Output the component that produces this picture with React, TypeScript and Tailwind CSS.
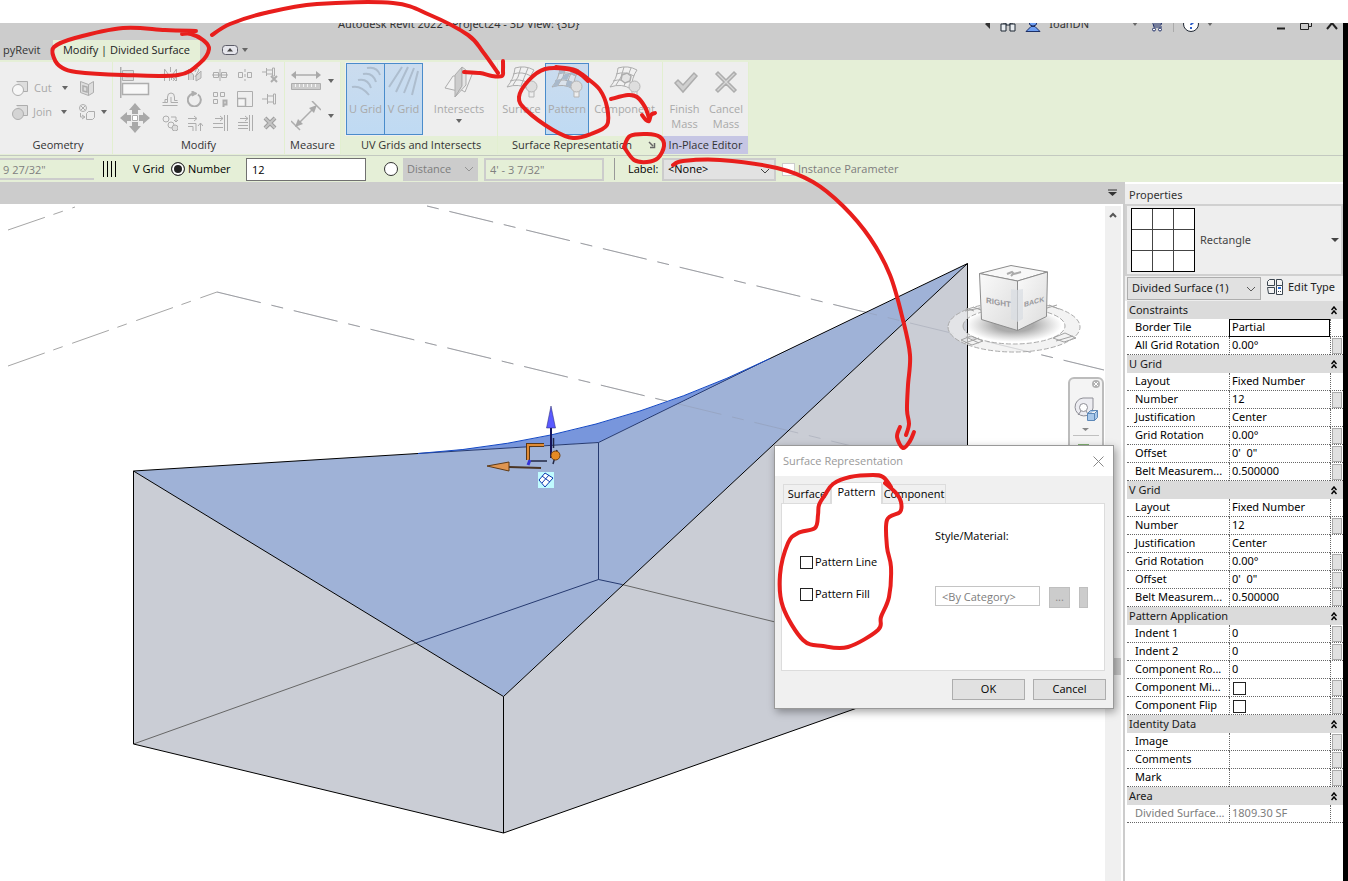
import { useId, useState } from "react";
import type { ReactNode } from "react";

type Point = [number, number];

type Row = {
  name: string;
  value?: string;
  check?: boolean;
  button?: boolean;
  boxed?: boolean;
  muted?: boolean;
};

const groups: { title: string; rows: Row[] }[] = [
  {
    title: "Constraints",
    rows: [
      { name: "Border Tile", value: "Partial", boxed: true },
      { name: "All Grid Rotation", value: "0.00°", button: true },
    ],
  },
  {
    title: "U Grid",
    rows: [
      { name: "Layout", value: "Fixed Number" },
      { name: "Number", value: "12", button: true },
      { name: "Justification", value: "Center" },
      { name: "Grid Rotation", value: "0.00°", button: true },
      { name: "Offset", value: "0'  0\"", button: true },
      { name: "Belt Measurem...", value: "0.500000", button: true },
    ],
  },
  {
    title: "V Grid",
    rows: [
      { name: "Layout", value: "Fixed Number" },
      { name: "Number", value: "12", button: true },
      { name: "Justification", value: "Center" },
      { name: "Grid Rotation", value: "0.00°", button: true },
      { name: "Offset", value: "0'  0\"", button: true },
      { name: "Belt Measurem...", value: "0.500000", button: true },
    ],
  },
  {
    title: "Pattern Application",
    rows: [
      { name: "Indent 1", value: "0", button: true },
      { name: "Indent 2", value: "0", button: true },
      { name: "Component Ro...", value: "0" },
      { name: "Component Mi...", check: true, button: true },
      { name: "Component Flip", check: true, button: true },
    ],
  },
  {
    title: "Identity Data",
    rows: [
      { name: "Image", button: true },
      { name: "Comments", button: true },
      { name: "Mark", button: true },
    ],
  },
  {
    title: "Area",
    rows: [{ name: "Divided Surface...", value: "1809.30 SF", muted: true }],
  },
];

// Freehand red marker strokes
const strokes: Point[][] = [
  [[196, 31], [165, 30], [123, 28], [75, 38], [54, 47], [54, 58], [61, 67], [76, 72], [123, 75], [178, 75], [200, 63], [209, 49], [203, 40], [191, 34], [182, 34]],
  [[212, 35], [230, 24], [265, 13], [317, 4], [393, 3], [430, 15], [468, 35], [483, 52], [498, 73]],
  [[464, 72], [480, 73], [492, 76], [502, 76], [503, 70], [503, 61]],
  [[556, 67], [575, 70], [588, 79], [600, 90], [607, 107], [607, 125], [591, 134], [573, 138], [553, 130], [526, 110], [519, 97], [529, 80], [545, 69], [567, 69], [580, 74], [588, 81]],
  [[611, 99], [628, 95], [637, 97], [645, 107], [649, 118]],
  [[642, 115], [646, 120], [649, 121], [651, 115], [655, 113]],
  [[624, 147], [630, 136], [647, 134], [660, 137], [664, 146], [658, 158], [647, 162], [634, 160], [624, 147]],
  [[673, 165], [683, 161], [720, 160], [777, 168], [813, 182], [843, 206], [870, 238], [890, 275], [903, 320], [910, 355], [908, 385], [907, 410], [909, 424], [906, 435]],
  [[900, 427], [897, 437], [903, 448], [910, 441], [914, 432]],
  [[886, 482], [891, 487], [883, 477], [873, 475], [850, 477], [833, 484], [825, 495], [819, 505], [818, 515], [815, 528], [798, 533], [788, 543], [780, 575], [783, 607], [803, 640], [823, 646], [848, 647], [878, 630], [881, 617], [889, 597], [891, 567], [887, 547], [887, 520], [900, 512], [901, 502], [896, 493], [885, 483]],
];

// Catmull-Rom spline through all points
function smooth(points: Point[]) {
  let d = `M${points[0][0]} ${points[0][1]}`;
  for (let i = 0; i < points.length - 1; i++) {
    const a = points[i - 1] ?? points[i];
    const b = points[i];
    const c = points[i + 1];
    const e = points[i + 2] ?? c;
    d += `C${b[0] + (c[0] - a[0]) / 6} ${b[1] + (c[1] - a[1]) / 6} ${c[0] - (e[0] - b[0]) / 6} ${c[1] - (e[1] - b[1]) / 6} ${c[0]} ${c[1]}`;
  }
  return d;
}

function Glyph({ w = 16, h = 16, children }: { w?: number; h?: number; children: ReactNode }) {
  return (
    <svg width={w} height={h} viewBox={`0 0 ${w} ${h}`} fill="none" stroke="#adadad" className="block shrink-0" aria-hidden="true">
      {children}
    </svg>
  );
}

function Caret({ color = "#666" }: { color?: string }) {
  return (
    <svg width="6" height="4" viewBox="0 0 6 4" className="block shrink-0" aria-hidden="true">
      <path d="M0 0h6L3 4z" fill={color} />
    </svg>
  );
}

function Combo({ value, label, className, disabled }: { value: string; label: string; className: string; disabled?: boolean }) {
  return (
    <div className={`relative ${className}`}>
      <select
        aria-label={label}
        disabled={disabled}
        className="block h-full w-full appearance-none bg-transparent pl-1 outline-none"
      >
        <option>{value}</option>
      </select>
      <svg width="10" height="6" viewBox="0 0 10 6" fill="none" stroke="currentColor" className="pointer-events-none absolute top-2 right-1 opacity-70">
        <path d="M1 1l4 4 4-4" />
      </svg>
    </div>
  );
}

function TitleBar() {
  return (
    <div className="h-[17px] overflow-hidden bg-[#cccccc]">
      <div className="-mt-2 flex h-[18px] items-center">
        <span className="ml-[338px] whitespace-pre font-['Noto_Sans',sans-serif] text-[#333]">{"Autodesk Revit 2022 - Project24 - 3D View: {3D}"}</span>
        <div className="mr-[2px] ml-auto flex items-center">
          <svg width="6" height="10" viewBox="0 0 6 10" className="mr-2"><path d="M5 1v9L0 5z" fill="#333" /></svg>
          <svg width="18" height="16" viewBox="0 0 18 16" fill="#e8ecf0" stroke="#1d2733" className="mr-2">
            <path d="M4 2h3v5H4zM11 2h3v5h-3zM7 6h4v3H7z" />
            <path d="M2 8h5v7H2zM11 8h5v7h-5z" />
          </svg>
          <svg width="16" height="16" viewBox="0 0 16 16" fill="#6f9ff2" stroke="#1c2f66" className="mr-2">
            <circle cx="8" cy="6" r="4" />
            <path d="M1 15.500l5-5h4l5 5z" />
          </svg>
          <span className="mr-[43px] font-['Noto_Sans',sans-serif] text-[#333]">IoanDN</span>
          <Caret />
          <svg width="16" height="16" viewBox="0 0 16 16" fill="none" stroke="#1f2f68" className="ml-[10px]">
            <path d="M1 4h3l2 7h8M4 5h10l-1 4H5M6 7h8" />
            <circle cx="6" cy="13.500" r="1.500" fill="#fff" />
            <circle cx="12" cy="13.500" r="1.500" fill="#fff" />
          </svg>
          <div className="mx-[9px] h-4 w-px bg-[#aaa]" />
          <svg width="16" height="16" viewBox="0 0 16 16" fill="#fff" stroke="#1f2733" className="mr-2">
            <circle cx="8" cy="8" r="7.500" />
            <path d="M6 5c0-3 5-3 5 0 0 2-3 2-3 4M8 11v2" stroke="#2f5fc8" strokeWidth="2" fill="none" />
          </svg>
          <Caret />
          <svg width="64" height="16" viewBox="0 0 64 16" fill="none" stroke="#222" className="ml-16">
            <path d="M0 12.500h8" strokeWidth="2" />
            <path d="M23.500 7.500h8v6h-8zM26.500 7V5.500h8v5H32" strokeWidth="1" />
            <path d="M50 13l5-6 5 6" strokeWidth="2" />
          </svg>
        </div>
      </div>
    </div>
  );
}

function RibbonTabs() {
  return (
    <div className="flex h-5 bg-[#cccccc]">
      <button className="w-[53px] pl-[3px] text-left text-[#333]">pyRevit</button>
      <button className="w-[147px] bg-[#e5efd7] whitespace-nowrap text-[#222]">Modify | Divided Surface</button>
      <button className="ml-[22px] flex items-center gap-1" aria-label="Minimize ribbon">
        <svg width="16" height="10" viewBox="0 0 16 10">
          <rect x="0.500" y="0.500" width="15" height="9" rx="3" fill="#e6e6ec" stroke="#5c5c68" />
          <path d="M5 6.500h6L8 3z" fill="#444" />
        </svg>
        <Caret />
      </button>
    </div>
  );
}

function Panel({ title, className, titleClass = "", children }: { title: ReactNode; className: string; titleClass?: string; children: ReactNode }) {
  return (
    <section className={`flex shrink-0 flex-col border-r border-[#e2efd0] bg-[#eeeeee] ${className}`}>
      <div className="h-[74px] pt-px">{children}</div>
      <div className={`flex h-[18px] items-center justify-center whitespace-nowrap text-[#333] ${titleClass}`}>{title}</div>
    </section>
  );
}

function BigButton({ icon, label, className, active, arrow }: { icon: ReactNode; label: ReactNode; className: string; active?: boolean; arrow?: boolean }) {
  return (
    <button
      className={`flex h-[72px] shrink-0 flex-col items-center border pt-[2px] leading-[15px] text-[#a9a9a9] ${
        active ? "border-[#4a8ccb] bg-linear-to-b from-[#cbdcee] to-[#bfdaf3]" : "border-transparent"
      } ${className}`}
    >
      {icon}
      <span className="mt-[3px] whitespace-nowrap">{label}</span>
      {arrow && <span className="mt-[3px]"><Caret /></span>}
    </button>
  );
}

function Bulb() {
  return (
    <g>
      <path d="M24 24v7h5v-7" fill="#eee" stroke="#b5b5b5" />
      <circle cx="26.500" cy="20.500" r="5.500" fill="#dedede" stroke="#b5b5b5" />
    </g>
  );
}

function SurfaceIcon({ kind }: { kind: "grid" | "checks" | "component" }) {
  return (
    <Glyph w={34} h={32}>
      <path d="M10 2q10-3 19 2-5 7-6 19-9-6-21-2 7-8 8-19z" fill={kind === "checks" ? "#dbe3ec" : "#f1f1f1"} />
      <path d="M8 8q9-3 18 2M5 15q9-3 19 2M16 1q-2 11-8 18M23 2q-4 10-7 18" />
      {kind === "checks" && (
        <path d="M10 2l6-1-2 6-5 1zM22 2l6 2-3 6-5-2zM15 8l5 0-3 6-6-1zM6 14l5-1-3 7-5 1zM17 14l6 2-1 6-6-2z" fill="#a9b9cb" stroke="none" />
      )}
      {kind === "component" && <path d="M14 9l5-2 4 3-1 5-5 2-4-3z" fill="#e4e4e4" strokeWidth="1.500" />}
      <Bulb />
    </Glyph>
  );
}

const uGridIcon = (
  <Glyph w={32} h={32}>
    <path d="M17 2q10-2 13 7M13 8q10-2 13 8M8 14q10-2 13 8M2 21q9-2 17 8" stroke="#adbdce" strokeWidth="2" />
  </Glyph>
);

const vGridIcon = (
  <Glyph w={32} h={32}>
    <path d="M14 1L1 21M20 1L8 26M26 2l-10 25M30 5l-6 24" stroke="#adbdce" strokeWidth="2" />
  </Glyph>
);

const intersectsIcon = (
  <Glyph w={34} h={32}>
    <path d="M11 10h9l-4 15-13-3zM20 6h11l-8 20-9-5z" fill="#f2f2f2" />
    <path d="M20 1v19l-7 11V9z" fill="#cdcdcd" />
    <path d="M20 1l4 3v15l-11 12 7-11z" fill="#e5e5e5" />
  </Glyph>
);

const modifyIcons: { name: string; art: ReactNode }[] = [
  { name: "Mirror - Pick Axis", art: <><path d="M2.500 14V2l5 7v5M14.500 14V2l-5 7v4" /><path d="M8.500 0v5M10 10l4 4M14 10l-3 4" /></> },
  { name: "Mirror - Draw Axis", art: <><path d="M1.500 13V2l5 6v5M9 14V9l5-5v7z" fill="#d8d8d8" /><path d="M8 5l2-4 2 2-4 7" /></> },
  { name: "Split Element", art: <><path d="M1.500 5.500h5v5h-5zM9.500 5.500h5v5h-5zM0 8h16M8 2v12" /></> },
  { name: "Split with Gap", art: <><path d="M1.500 5.500h4v5h-4zM10.500 5.500h4v5h-4z" /><path d="M8 2v12" strokeDasharray="3 2" /></> },
  { name: "Unpin", art: <><path d="M0 5h4M4.500 1v8M4.500 3h6v4h-6M10.500 1l2 0v8h-2z" /><path d="M9 9l6 6M15 9l-6 6" strokeWidth="2" /></> },
  { name: "Offset", art: <path d="M.5 11.500h5V6q0-4 3.500-4t3.500 4v3.500h3M.5 14.500h15M3 11V8.500h3M9 11.500V6M9 11.500h7" /> },
  { name: "Rotate", art: <><path d="M11 3.500A6.500 6.500 0 1 1 6 2.500" strokeWidth="2" /><path d="M5 0l5 2.500L5 5z" fill="#adadad" /></> },
  { name: "Array", art: <><path d="M1.500 1.500h4v4h-4zM8.500 1.500h4v4h-4zM1.500 8.500h4v4h-4z" /><path d="M11.500 16V9.500h3v4h-3" strokeWidth="2" /></> },
  { name: "Scale", art: <><path d="M.5 .5h15v15h-15z" /><path d="M.5 7.500h8v8h-8z" fill="#f5f5f5" strokeWidth="1.500" /></> },
  { name: "Pin", art: <path d="M0 8h5M5.500 3v10M5.500 5h6v6h-6M11.500 3h2v10h-2z" /> },
  { name: "Copy", art: <><circle cx="4" cy="4" r="3" /><circle cx="9" cy="10" r="3" /><circle cx="13" cy="13" r="3" fill="#ddd" /><path d="M9 2h5v4M12 5l2 2 2-2" /></> },
  { name: "Trim to Corner", art: <><path d="M1 3.500h8M7 1l3 2.500L7 6M1 8.500h8V16M1 11.500h5V16M13.500 16V8M11 11l2.500-3 2.500 3" /></> },
  { name: "Trim Single", art: <><path d="M3 3.500h8M8 1l3 2.500L8 6M1 8.500h10M1 12.500h10M12.500 0v16M15.500 0v16" /></> },
  { name: "Trim Multiple", art: <><path d="M3 3.500h8M8 1l3 2.500L8 6M1 7.500h10M1 10.500h10M1 13.500h10M12.500 0v16M15.500 0v16" /></> },
  { name: "Delete", art: <><path d="M3 3l10 10M13 3L3 13" strokeWidth="4" stroke="#9d9d9d" /><path d="M3 3l10 10M13 3L3 13" strokeWidth="2" stroke="#c4c4c4" /></> },
];

function Ribbon() {
  return (
    <div className="flex border-b border-[#c3c9c0] bg-[#e5efd7] pt-[2px] pb-px">
      <Panel title="Geometry" className="w-[113px] pl-1">
        <div className="grid grid-cols-[67px_auto] gap-y-2 pt-[17px] pl-2 text-[#a9a9a9]">
          <button className="flex h-4 items-center gap-[6px]">
            <Glyph>
              <path d="M4.500 1.500h11v10h-5" fill="#ddd" />
              <circle cx="6" cy="10" r="5.500" fill="#f7f7f7" />
            </Glyph>
            Cut
            <span className="ml-1"><Caret /></span>
          </button>
          <button className="h-4" aria-label="Split face">
            <Glyph>
              <path d="M1.500 1.500l8 3v11l-8-3zM9.500 4.500l5-3v11l-5 3" fill="#ddd" />
              <path d="M4 6l4 1v5l-4-1z" strokeWidth="1.500" />
            </Glyph>
          </button>
          <button className="flex h-4 items-center gap-[5px]">
            <Glyph>
              <path d="M4.500 1.500h11v10h-5" fill="#ddd" />
              <circle cx="6" cy="10" r="5.500" fill="#d4d4d4" />
            </Glyph>
            Join
            <span className="ml-1"><Caret /></span>
          </button>
          <button className="flex h-4 items-center gap-[6px]" aria-label="Paint">
            <Glyph>
              <circle cx="4" cy="4" r="3.500" />
              <path d="M2 2l4 4M6 2L2 6M1.500 9v4h4M3 11l3 2-3 2M7.500 9.500l2-2h6v6l-2 2h-6z" />
            </Glyph>
            <Caret />
          </button>
        </div>
      </Panel>

      <Panel title="Modify" className="w-[172px]">
        <div className="flex gap-3 pt-1 pl-[7px]">
          <div className="flex flex-col gap-1">
            <button aria-label="Align">
              <Glyph w={30} h={32}>
                <path d="M.5 0v31" strokeWidth="2" />
                <path d="M2.500 3.500h11v10h-11z" fill="#ddd" />
                <path d="M2.500 16.500h26v11h-26z" fill="#f7f7f7" strokeWidth="1.500" />
              </Glyph>
            </button>
            <button aria-label="Move">
              <Glyph w={30} h={30}>
                <path
                  d="M15 0l6 7h-3v4h-6V7H9zM15 30l-6-7h3v-4h6v4h3zM0 15l7-6v3h4v6H7v3zM30 15l-7 6v-3h-4v-6h4V9z"
                  fill="#a9a9a9"
                  stroke="none"
                />
                <path d="M12.500 12.500h5v5h-5z" fill="#fff" />
              </Glyph>
            </button>
          </div>
          <div className="grid grid-cols-5 content-start gap-x-[9px] gap-y-2">
            {modifyIcons.map((icon) => (
              <button key={icon.name} aria-label={icon.name}>
                <Glyph>{icon.art}</Glyph>
              </button>
            ))}
          </div>
        </div>
      </Panel>

      <Panel title="Measure" className="w-[56px]">
        <div className="flex flex-col gap-[10px] pt-2 pl-[6px]">
          <button className="flex items-center gap-[7px]" aria-label="Measure">
            <Glyph w={30} h={20}>
              <path d="M3 4h24" strokeWidth="1.500" />
              <path d="M0 4l5-4v8zM30 4l-5-4v8z" fill="#a9a9a9" stroke="none" />
              <path d="M.5 12.500h29v6H.5z" fill="#ccc" />
              <path d="M4.500 13v3M8.500 13v3M12.500 13v3M16.500 13v3M20.500 13v3M24.500 13v3" stroke="#f4f4f4" />
            </Glyph>
            <Caret />
          </button>
          <button className="flex items-center gap-[7px]" aria-label="Dimension">
            <Glyph w={30} h={30}>
              <path d="M6 24L24 6M0 20l9 9M21 0l9 9" strokeWidth="1.500" />
              <path d="M4 26l3-8 5 5zM26 4l-3 8-5-5z" fill="#a9a9a9" stroke="none" />
            </Glyph>
            <Caret />
          </button>
        </div>
      </Panel>

      <Panel title="UV Grids and Intersects" titleClass="bg-[#e5efd7]" className="ml-1 w-[153px]">
        <div className="flex pl-px">
          <BigButton icon={uGridIcon} label="U Grid" active className="w-[39px]" />
          <BigButton icon={vGridIcon} label="V Grid" active className="-ml-px w-[39px]" />
          <BigButton icon={intersectsIcon} label="Intersects" arrow className="w-[72px]" />
        </div>
      </Panel>

      <Panel
        className="w-[165px]"
        titleClass="bg-[#e5efd7]"
        title={
          <>
            <span className="ml-2">Surface Representation</span>
            <button className="ml-4" aria-label="Open surface representation">
              <svg width="8" height="8" viewBox="0 0 8 8" fill="none" stroke="#666">
                <path d="M1 1l4 4M6.500 2v4.500H2" strokeWidth="1.500" />
              </svg>
            </button>
          </>
        }
      >
        <div className="flex">
          <BigButton icon={<SurfaceIcon kind="grid" />} label="Surface" className="w-[47px]" />
          <BigButton icon={<SurfaceIcon kind="checks" />} label="Pattern" active className="w-[44px]" />
          <BigButton icon={<SurfaceIcon kind="component" />} label="Component" className="w-[71px]" />
        </div>
      </Panel>

      <Panel title="In-Place Editor" titleClass="bg-[#c6c6e4]" className="w-[86px]">
        <div className="flex">
          <BigButton
            className="w-[43px]"
            label={<>Finish<br />Mass</>}
            icon={
              <Glyph w={32} h={32}>
                <path d="M6 17l3-3 5 5L25 7l3 3-14 16z" fill="#cfcfcf" strokeWidth="1.500" />
              </Glyph>
            }
          />
          <BigButton
            className="w-[40px]"
            label={<>Cancel<br />Mass</>}
            icon={
              <Glyph w={32} h={32}>
                <path d="M6 8l2-2 8 8 8-8 2 2-8 8 8 8-2 2-8-8-8 8-2-2 8-8z" fill="#d6d6d6" strokeWidth="1.500" />
              </Glyph>
            }
          />
        </div>
      </Panel>
    </div>
  );
}

function Radio({ checked, label }: { checked?: boolean; label: string }) {
  return (
    <input
      type="radio"
      name="v-grid"
      aria-label={label}
      defaultChecked={checked}
      className="h-[14px] w-[14px] shrink-0 appearance-none rounded-full border border-[#333] bg-white checked:bg-[#222] checked:shadow-[inset_0_0_0_2px_white]"
    />
  );
}

function OptionsBar() {
  return (
    <div className="flex h-[26px] items-center bg-[#e5efd7] whitespace-nowrap text-black">
      <input aria-label="U distance" readOnly defaultValue={'9 27/32"'} className="h-[22px] w-[94px] border-y-2 border-[#cccccc] bg-[#e5efd7] pl-[3px] text-[#808080]" />
      <div className="ml-[9px] flex gap-[3px]">
        <div className="h-4 w-px bg-black" />
        <div className="h-4 w-px bg-black" />
        <div className="h-4 w-px bg-black" />
        <div className="h-4 w-px bg-black" />
      </div>
      <span className="ml-[17px] w-[38px]">V Grid</span>
      <Radio label="Number" checked />
      <span className="ml-[3px] w-[58px]">Number</span>
      <input aria-label="V grid number" defaultValue="12" className="h-[23px] w-[120px] border border-[#707070] bg-white pl-[5px]" />
      <span className="ml-[18px] flex"><Radio label="Distance" /></span>
      <Combo label="Distance rule" disabled value="Distance" className="ml-[5px] h-[23px] w-[75px] bg-[#cccccc] text-[#7d7d7d]" />
      <input aria-label="V distance" readOnly defaultValue={"4' - 3 7/32\""} className="ml-[6px] h-[23px] w-[120px] border-2 border-[#cccccc] bg-[#e5efd7] pl-1 text-[#808080]" />
      <div className="ml-[10px] h-[22px] w-px bg-[#999]" />
      <span className="ml-[13px] w-[34px]">Label:</span>
      <Combo label="Label" value="<None>" className="h-[23px] w-[114px] border-2 border-[#cccccc] bg-[#e2e2e2]" />
      <label className="ml-[6px] flex items-center gap-[3px] text-[#7d7d7d]">
        <input type="checkbox" disabled className="h-[13px] w-[13px] appearance-none border border-[#cccccc] bg-white" />
        Instance Parameter
      </label>
    </div>
  );
}

const axisRight = "M217 292L860 448";
const axisTop = "M427 206L1104 370";

function Model() {
  return (
    <svg viewBox="0 204 1105 677" width="1105" height="677" className="absolute top-0 left-0" role="img" aria-label="3D mass with divided surface">
      <defs>
        <radialGradient id="cube-shadow">
          <stop offset="0.4" stopColor="#888" stopOpacity="0.7" />
          <stop offset="1" stopColor="#999" stopOpacity="0" />
        </radialGradient>
        <linearGradient id="cube-face" x2="1" y2="1">
          <stop offset="0" stopColor="#fafafa" />
          <stop offset="1" stopColor="#dcdcdc" />
        </linearGradient>
      </defs>
      <g fill="none" stroke="#a6a6a6">
        <path d="M8 230L75 207M8 366L217 292" strokeDasharray="39 9 10 10" />
        <path d={axisRight} strokeDasharray="45 11 12 11" />
        <path d={axisTop} strokeDasharray="45 11 12 11" strokeDashoffset="56" />
      </g>

      {/* Side walls, then the warped top face */}
      <path d="M133.500 471L503.500 696.500V833L133.500 744zM503.500 696.500L967.500 263.500V669L503.500 833z" fill="#cacdd5" />
      <path d="M418 453.500Q598 442 770 358.500L967.500 263.500L598.500 442.500z" fill="#7896dc" />
      <path d="M133.500 471L598.500 442.500L967.500 263.500L503.500 696.500z" fill="#9fb2d7" />
      <g fill="none" stroke="#8a90a0" strokeOpacity="0.35">
        <path d={axisRight} strokeDasharray="45 11 12 11" />
        <path d={axisTop} strokeDasharray="45 11 12 11" strokeDashoffset="56" />
      </g>
      <g fill="none" strokeWidth="1">
        <path d="M133.500 744L416 643M622 584.500L967 669" stroke="#666" />
        <path d="M416 643L598.500 579.500V442.500M598.500 579.500L622 584.500M418 453.500L598.500 442.500L770 358.500" stroke="#263a70" />
        <path d="M133.500 471L418 453.500M770 358.500L967.500 263.500V669L503.500 833L133.500 744V471L503.500 696.500V833M503.500 696.500L967.500 263.500" stroke="#000" />
        <path d="M418 453.500Q598 442 770 358.500" stroke="#1448c4" />
      </g>

      {/* Drag controls */}
      <path d="M551 427v31" stroke="#14145a" strokeWidth="2" />
      <path d="M551 406l4.500 22h-9z" fill="#5a5aff" stroke="#22226a" strokeWidth="0.500" />
      <path d="M509 467l32 1" stroke="#4a3524" strokeWidth="2" />
      <path d="M487 466l22-4v9z" fill="#df9550" stroke="#5f3b18" />
      <path d="M528 460v-15h16" fill="none" stroke="#5b3716" strokeWidth="4" />
      <path d="M528 460v-15h16" fill="none" stroke="#e08b35" strokeWidth="2" />
      <path d="M531 461h16M553.500 438v10M557 450l-4 14" stroke="#222744" strokeWidth="1.500" />
      <path d="M530 460l-2 5" stroke="#3434d8" strokeWidth="3" />
      <circle cx="555.500" cy="455.500" r="4.500" fill="#e58a25" stroke="#6f4010" />
      <path d="M538 472h16v16h-16z" fill="#c0fbff" />
      <path d="M545 473l8 5-8 9-6-7zM542 476l8 6M549 475l-7 8" fill="#fff" stroke="#0d3bb0" />

      {/* View cube on its compass ring */}
      <path
        d="M948 327a66 25 0 1 0 132 0a66 25 0 1 0 -132 0M963 326a51 18 0 1 0 102 0a51 18 0 1 0 -102 0"
        fill="#eeeeee"
        fillOpacity="0.700"
        fillRule="evenodd"
        stroke="#aaa"
        strokeDasharray="5 2"
      />
      <g stroke="#a2a2a2" fill="none">
        <path d="M961 340l10-4 12 5-11 4zM965 343l14-5M966 337l13 6M1053 338l12-5 11 5-12 4zM1056 341l17-5M966 308l8 3M973 307l8 3M965 311l15-3M1047 308l10-3M1049 305l10 4" />
      </g>
      <ellipse cx="1014" cy="325" rx="48" ry="17" fill="url(#cube-shadow)" />
      <g stroke="#8c8c8c">
        <path d="M979.500 273.500L1011 265.500L1047.500 272L1017.500 281z" fill="#f8f8f8" />
        <path d="M979.500 273.500L1017.500 281V330.500L981.500 319.500z" fill="url(#cube-face)" />
        <path d="M1017.500 281L1047.500 272L1046.500 316.500L1017.500 330.500z" fill="url(#cube-face)" />
      </g>
      <path d="M1011 289l6 1v31l-6-2zM1017 290l6-1v30l-6 3z" fill="#d9dde2" fillOpacity="0.700" />
      <g fontSize="8" fontWeight="700" fill="#98989c" className="font-['Liberation_Sans',sans-serif]">
        <text transform="translate(986 303) skewY(10)">RIGHT</text>
        <text transform="translate(1024 307) skewY(-16)" fontSize="7">BACK</text>
      </g>
      <path d="M1007 274l5-2 2 2 7-2M1011 276l3-3" stroke="#aaa" strokeWidth="2" fill="none" />

      {/* Navigation bar */}
      <rect x="1069" y="378" width="34" height="90" rx="5" fill="#f4f4f4" stroke="#bcbcbc" strokeWidth="2" />
      <circle cx="1096" cy="384" r="4" fill="#b2b2b2" />
      <path d="M1094 382l4 4M1098 382l-4 4" stroke="#fff" />
      <path d="M1083 398h10v10a9 9 0 1 1-10-10z" fill="#ececf1" stroke="#8e8e96" />
      <circle cx="1083.500" cy="407.500" r="4" fill="#fff" stroke="#8e8e96" />
      <path d="M1081 411l-3 4M1086 411l2 3" stroke="#8e8e96" />
      <path d="M1087.500 413.500l3-3h7v7l-3 3h-7zM1087.500 413.500h7l3-3M1094.500 413.500v7" fill="#a8c8ea" stroke="#5d88b8" />
      <path d="M1082 428h7l-3.500 3z" fill="#888" />
      <path d="M1073 435.500h26" stroke="#c0c0c0" />
      <path d="M1078 444h11v4h-11z" fill="#7fae70" />
    </svg>
  );
}

function Workspace() {
  return (
    <main className="flex min-w-0 flex-1 flex-col">
      <div className="flex h-[22px] items-center justify-end bg-[#cccccc] pr-[6px]">
        <button aria-label="Open views">
          <svg width="9" height="8" viewBox="0 0 9 8"><path d="M0 1h9" stroke="#333" /><path d="M0 3h9L4.500 7z" fill="#333" /></svg>
        </button>
      </div>
      <div className="flex flex-1">
        <div className="relative min-w-0 flex-1 overflow-hidden bg-white">
          <Model />
        </div>
        <div className="mt-[2px] mr-[2px] flex w-4 flex-col items-center bg-[#f0f0f0] pt-[6px]">
          <svg width="8" height="6" viewBox="0 0 8 6" fill="none" stroke="#555" strokeWidth="2"><path d="M1 5l3-3 3 3" /></svg>
          <div className="mt-[440px] h-[17px] w-4 bg-[#c8c8c8]" />
        </div>
      </div>
    </main>
  );
}

function PropertyRow({ row }: { row: Row }) {
  return (
    <tr className={`h-[18px] align-top ${row.muted ? "text-[#7d7d7d]" : "text-black"}`}>
      <th scope="row" className="border-b border-dotted border-[#666] p-0 pl-2 text-left font-normal whitespace-nowrap">
        {row.name}
      </th>
      <td className={row.boxed ? "border border-black p-0 leading-[14px]" : "border-b border-l border-dotted border-[#666] p-0"}>
        {row.check ? (
          <input type="checkbox" aria-label={row.name} className="mt-[3px] ml-[3px] block h-[13px] w-[13px] appearance-none border border-[#222] bg-white" />
        ) : (
          <span className="block whitespace-pre pl-[2px]">{row.value}</span>
        )}
      </td>
      <td className="border-b border-l border-dotted border-[#666] p-0 pl-px">
        {row.button && <button aria-label={`Associate ${row.name}`} className="mt-px block h-4 w-[10px] border border-[#aaa] bg-[#e0e0e0]" />}
      </td>
    </tr>
  );
}

function Properties() {
  return (
    <aside className="flex w-[220px] shrink-0 flex-col border-l-2 border-[#cccccc] bg-white font-['Noto_Sans',sans-serif]">
      <h2 className="mt-[2px] h-5 bg-[#eeeeee] pl-1 leading-[22px] text-[#333]">Properties</h2>
      <div className="flex h-[72px] items-center border-2 border-[#d0d0d0] bg-[#eeeeee] pr-[2px] pl-1 text-[#444]">
        <div className="grid h-16 w-16 grid-cols-3 gap-px border border-black bg-[#444]">
          {Array.from({ length: 9 }, (_, i) => <div key={i} className="bg-white" />)}
        </div>
        <span className="ml-[5px] flex-1">Rectangle</span>
        <svg width="8" height="4" viewBox="0 0 8 4"><path d="M0 0h8L4 4z" fill="#444" /></svg>
      </div>
      <div className="flex h-[25px] items-center bg-[#eeeeee] pl-[2px]">
        <Combo label="Selection filter" value="Divided Surface (1)" className="h-[23px] w-[134px] border border-[#adadad] bg-[#e1e1e1] text-[#222]" />
        <button className="ml-[6px] flex items-center gap-1 pb-[2px] whitespace-nowrap text-[#222]">
          <svg width="17" height="17" viewBox="0 0 17 17" fill="#f4f4f4" stroke="#3c4650">
            <path d="M.5 2.500l2-2h5v6h-7zM9.500 .5h5l1 2v4h-6zM.5 8.500h7v6h-6z" />
            <path d="M9.500 6.500h6v9h-6z" fill="#fff" />
            <path d="M11 9h3" stroke="#2c6ad0" strokeWidth="2" />
            <path d="M11 12.500h1M13 12.500h1" />
          </svg>
          Edit Type
        </button>
      </div>
      <table className="ml-[2px] w-[216px] table-fixed border-separate border-spacing-0 leading-4">
        <colgroup>
          <col className="w-[102px]" />
          <col />
          <col className="w-[13px]" />
        </colgroup>
        {groups.map((group) => (
          <tbody key={group.title}>
            <tr className="h-[18px] bg-[#dbdbdb] text-[#1a1a1a]">
              <th colSpan={3} scope="colgroup" className="p-0 font-normal">
                <button className="flex w-full items-center justify-between pr-[6px] pl-[2px]">
                  {group.title}
                  <svg width="6" height="9" viewBox="0 0 6 9" fill="none" stroke="#000" strokeWidth="1.500"><path d="M.5 4L3 1l2.500 3M.5 8L3 5l2.500 3" /></svg>
                </button>
              </th>
            </tr>
            {group.rows.map((row) => <PropertyRow key={row.name} row={row} />)}
          </tbody>
        ))}
      </table>
    </aside>
  );
}

function PatternCheck({ label }: { label: string }) {
  const id = useId();
  return (
    <div className="flex items-center gap-[2px]">
      <input id={id} type="checkbox" className="h-[13px] w-[13px] appearance-none border border-[#222] bg-white" />
      <label htmlFor={id}>{label}</label>
    </div>
  );
}

function SurfaceDialog() {
  const [tab, setTab] = useState("Pattern");
  return (
    <div role="dialog" aria-label="Surface Representation" className="absolute top-[445px] left-[774px] w-[340px] border border-[#999] bg-[#f0f0f0] pb-2 text-black shadow-[2px_3px_8px_rgba(0,0,0,0.35)]">
      <div className="flex h-[30px] items-center justify-between bg-white pr-[9px] pl-2 text-[#999]">
        Surface Representation
        <button aria-label="Close">
          <svg width="11" height="11" viewBox="0 0 11 11" stroke="#888"><path d="M.5.5l10 10M10.500.5l-10 10" /></svg>
        </button>
      </div>
      <div role="tablist" className="flex h-[27px] items-end pl-2">
        {["Surface", "Pattern", "Component"].map((name) => (
          <button
            key={name}
            role="tab"
            aria-selected={tab === name}
            onClick={() => setTab(name)}
            className={`border border-b-0 border-[#dcdcdc] ${
              tab === name ? "relative -mb-px h-[22px] w-[51px] bg-white pb-[2px]" : name === "Surface" ? "h-[19px] w-[48px] bg-[#f0f0f0]" : "h-[19px] w-[64px] bg-[#f0f0f0]"
            }`}
          >
            {name}
          </button>
        ))}
      </div>
      <div className="mr-2 ml-[6px] flex h-[168px] justify-between border border-[#dcdcdc] bg-white pr-4 pl-[18px]">
        <div className="flex flex-col gap-4 pt-[50px] leading-4">
          <PatternCheck label="Pattern Line" />
          <PatternCheck label="Pattern Fill" />
        </div>
        <div className="pt-6">
          <div className="leading-4">Style/Material:</div>
          <div className="mt-[42px] flex items-start">
            <input aria-label="Pattern fill material" readOnly defaultValue="<By Category>" className="h-5 w-[105px] border border-[#c4c4c4] bg-white pl-[6px] text-[#7d7d7d]" />
            <button className="mt-px ml-[9px] h-[21px] w-[21px] border border-[#bfbfbf] bg-[#cccccc] text-[#888]">...</button>
            <button aria-label="Clear material" className="mt-px ml-[9px] h-[21px] w-[9px] border border-[#bfbfbf] bg-[#cccccc]" />
          </div>
        </div>
      </div>
      <div className="mt-2 mr-[7px] flex justify-end gap-2">
        <button className="h-[21px] w-[73px] border border-[#adadad] bg-[#e1e1e1]">OK</button>
        <button className="h-[21px] w-[73px] border border-[#adadad] bg-[#e1e1e1]">Cancel</button>
      </div>
    </div>
  );
}

function Markup() {
  return (
    <svg viewBox="0 0 1348 881" width="1348" height="881" fill="none" stroke="#e81e1c" strokeWidth="4" strokeLinecap="round" strokeLinejoin="round" className="pointer-events-none absolute top-0 left-0" aria-hidden="true">
      {strokes.map((points, i) => <path key={i} d={smooth(points)} />)}
    </svg>
  );
}

export default function App() {
  return (
    <div className="relative flex min-h-screen flex-col overflow-hidden bg-white pt-[23px] font-['Open_Sans','Noto_Sans',sans-serif] text-[11px]">
      <div className="flex flex-1 flex-col border-r-[5px] border-black">
        <TitleBar />
        <RibbonTabs />
        <Ribbon />
        <OptionsBar />
        <div className="flex flex-1">
          <Workspace />
          <Properties />
        </div>
      </div>
      <SurfaceDialog />
      <Markup />
    </div>
  );
}
